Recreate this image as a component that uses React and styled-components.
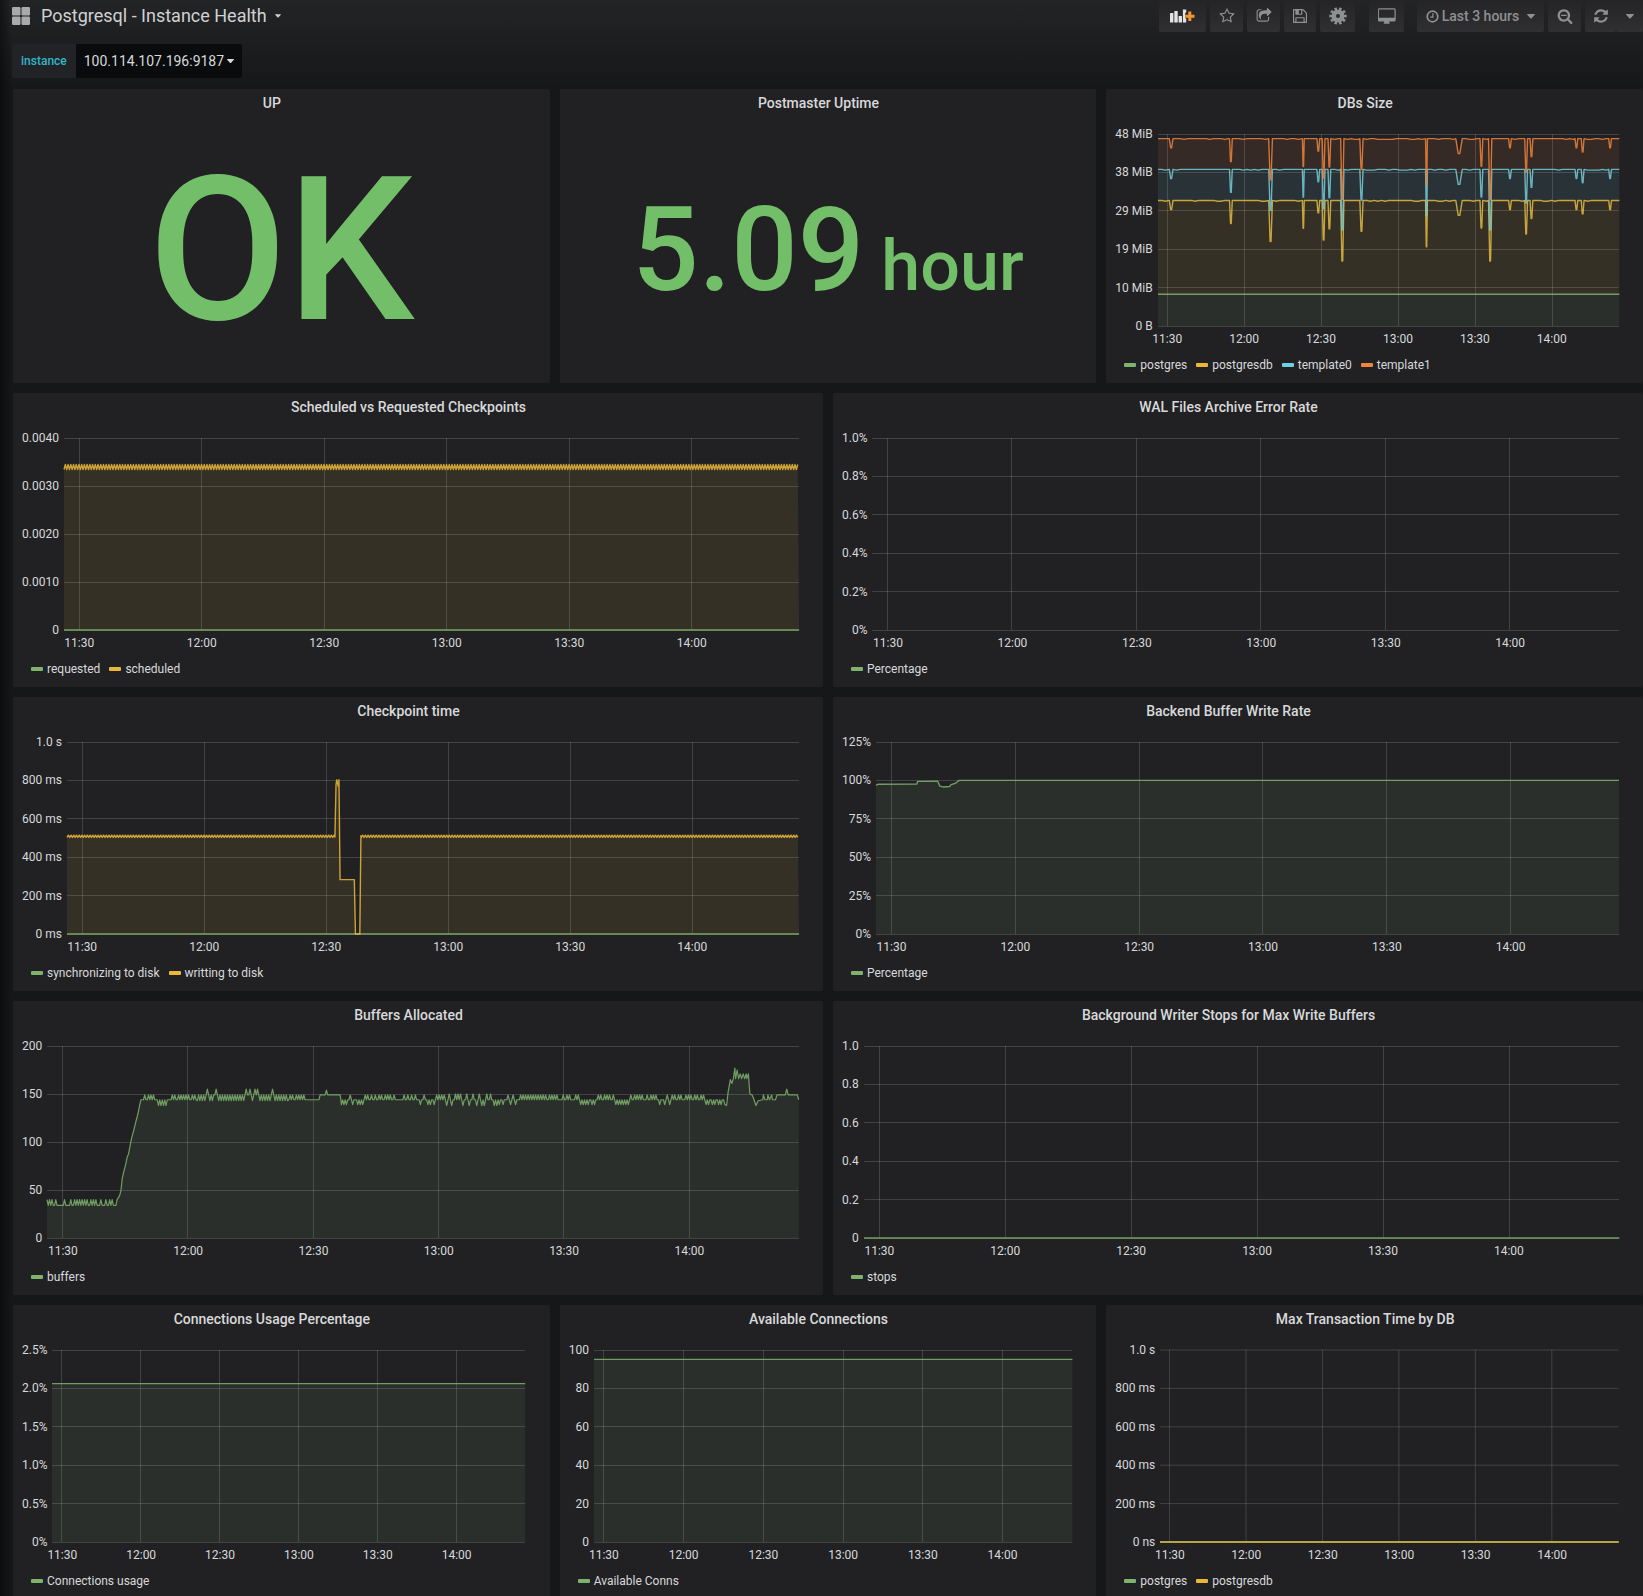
import React from "react";
import styled, { createGlobalStyle } from "styled-components";

const GREEN = "#7eb26d";
const YELLOW = "#eab839";
const BLUE = "#6ed0e0";
const ORANGE = "#ef843c";
const VALUE_GREEN = "#73bf69";

const GlobalStyle = createGlobalStyle`
  *, *::before, *::after { box-sizing: border-box; }
  html { background: #161719; }
  body {
    margin: 0;
    color: #d8d9da;
    font-family: Roboto, "Liberation Sans", sans-serif;
    font-size: 14px;
  }
  button, select { font: inherit; color: inherit; }
`;

/* ---------- page ---------- */

const Page = styled.main`
  height: 100vh;
  overflow-y: auto;
  scrollbar-width: none;
  padding-left: 13px;
  background:
    linear-gradient(90deg, rgba(0, 0, 0, 0.45), transparent 12px),
    linear-gradient(180deg, #222426, #161719 90px);
`;

const Navbar = styled.header`
  display: flex;
  align-items: center;
  justify-content: space-between;
  height: 32px;
  margin-left: -1px;
`;

const TitleButton = styled.button`
  display: flex;
  align-items: center;
  gap: 11px;
  padding: 0;
  border: 0;
  background: none;
  font-size: 18px;
  line-height: 22px;
  color: #d0d1d2;
`;

const TitleText = styled.span`
  margin-right: -3px;
`;

const Actions = styled.div`
  display: flex;
  gap: 4px;
`;

const ActionGroup = styled.div`
  display: flex;
  gap: ${(p) => (p.$joined ? "0" : "4px")};
  margin-right: ${(p) => p.$after || 0}px;
`;

const NavButton = styled.button`
  display: flex;
  align-items: center;
  justify-content: center;
  gap: 3px;
  width: ${(p) => p.$width}px;
  height: 32px;
  padding: 0;
  border: 0;
  border-radius: 2px;
  background: linear-gradient(180deg, #242427, #303033);
  color: #8f9091;
  font-size: 14px;
  font-weight: 500;
`;

const RangeText = styled.span`
  margin-right: 5px;
`;

const Variables = styled.form`
  display: flex;
  padding: 12px 0 11px;
  margin-left: -1px;
`;

const VariableLabel = styled.label`
  padding: 0 9px;
  border-radius: 2px 0 0 2px;
  background: #212327;
  color: #33b5c5;
  font-size: 12px;
  font-weight: 500;
  line-height: 34px;
`;

const SelectBox = styled.div`
  display: grid;
  grid-template-columns: 1fr 15px;
  align-items: center;
  height: 34px;
  background: #0a0b0d;
  border-radius: 0 2px 2px 0;

  svg {
    grid-area: 1 / 2;
    pointer-events: none;
  }
`;

const Select = styled.select`
  grid-area: 1 / 1 / 2 / 3;
  height: 34px;
  width: 166px;
  padding: 0 8px;
  border: 0;
  appearance: none;
  background: transparent;
  font-size: 14px;
`;

const Dashboard = styled.section`
  display: grid;
  grid-template-columns: repeat(6, 1fr);
  gap: 10px;
`;

/* ---------- panels ---------- */

const PanelBox = styled.article`
  grid-column: span ${(p) => p.$span};
  display: flex;
  flex-direction: column;
  min-width: 0;
  min-height: 294px;
  border-radius: 2px;
  background: #212124;
`;

const PanelTitle = styled.h2`
  margin: 0;
  padding-right: 19px;
  font-size: 14px;
  font-weight: 500;
  line-height: 28px;
  text-align: center;
`;

const Stat = styled.div`
  flex: 1;
  display: flex;
  align-items: baseline;
  align-content: center;
  justify-content: center;
  flex-wrap: wrap;
  gap: 0 ${(p) => p.$gap || 0}px;
  color: ${VALUE_GREEN};
  font-size: ${(p) => p.$size}px;
  font-weight: 500;
  line-height: 1;
`;

const Unit = styled.span`
  font-size: 70px;
`;

const ChartGrid = styled.div`
  display: grid;
  grid-template-columns: auto minmax(0, 1fr);
  grid-template-rows: 192px auto;
  column-gap: 5px;
  row-gap: 6px;
  padding: 17px 24px 0 9px;
  font-size: 12px;
  line-height: 14px;
`;

const YAxis = styled.div`
  display: flex;
  flex-direction: column;
  justify-content: space-between;
  margin: -7px 0;
  text-align: right;
  white-space: nowrap;
`;

const XAxis = styled.div`
  grid-column: 2;
  display: grid;
  grid-template-columns: repeat(6, 1fr);
  margin-left: -6.25%;
  margin-right: 6.25%;
  text-align: center;
`;

const Plot = styled.svg`
  display: block;
  width: 100%;
  height: 100%;
  overflow: visible;
`;

const Legend = styled.ul`
  display: flex;
  gap: 9px;
  margin: 0;
  padding: 12px 18px 11px;
  list-style: none;
  font-size: 12px;
  line-height: 14px;
`;

const LegendItem = styled.li`
  display: flex;
  align-items: center;
  gap: 4px;

  &::before {
    content: "";
    width: 12px;
    height: 4px;
    border-radius: 1px;
    background: ${(p) => p.$color};
  }
`;

/* ---------- chart ---------- */

const TIMES = ["11:30", "12:00", "12:30", "13:00", "13:30", "14:00"];
const W = 1000;
const H = 192;

const toPath = (points) =>
  points.map(([x, y]) => `${(x * W).toFixed(2)},${((1 - y) * H).toFixed(2)}`).join(" L");

function Chart({ title, span, labels, series }) {
  return (
    <PanelBox $span={span}>
      <PanelTitle>{title}</PanelTitle>
      <ChartGrid>
        <YAxis>
          {labels.map((l) => (
            <span key={l}>{l}</span>
          ))}
        </YAxis>
        <Plot viewBox={`0 0 ${W} ${H}`} preserveAspectRatio="none" role="img" aria-label={title}>
          <g stroke="#fff" strokeOpacity="0.15" shapeRendering="crispEdges">
            {labels.map((l, i) => {
              const y = (i / (labels.length - 1)) * H;
              return <line key={l} x1="0" x2={W} y1={y} y2={y} vectorEffect="non-scaling-stroke" />;
            })}
            {TIMES.map((t, i) => {
              const x = ((i + 0.5) / 6 - 0.0625) * W;
              return <line key={t} x1={x} x2={x} y1="0" y2={H} vectorEffect="non-scaling-stroke" />;
            })}
          </g>
          {series.map((s) => {
            if (!s.points) return null;
            const floor = s.base ? [...s.base].reverse() : [[1, 0], [0, 0]];
            return (
              <g key={s.name}>
                <path d={`M${toPath(s.points)} L${toPath(floor)}Z`} fill={s.color} fillOpacity="0.1" />
                <path
                  d={`M${toPath(s.points)}`}
                  fill="none"
                  stroke={s.color}
                  strokeOpacity="0.85"
                  strokeWidth={s.stroke || 1.4}
                  strokeLinejoin="round"
                  vectorEffect="non-scaling-stroke"
                />
              </g>
            );
          })}
        </Plot>
        <XAxis>
          {TIMES.map((t) => (
            <span key={t}>{t}</span>
          ))}
        </XAxis>
      </ChartGrid>
      <Legend>
        {series.map((s) => (
          <LegendItem key={s.name} $color={s.color}>
            {s.name}
          </LegendItem>
        ))}
      </Legend>
    </PanelBox>
  );
}

/* ---------- data ---------- */

const random = (seed) => () => {
  seed = (seed * 16807) % 2147483647;
  return seed / 2147483647;
};

const flat = (y) => [[0, y], [1, y]];

const zigzag = (from, to, y, amp, step = 1 / 540) => {
  const out = [];
  for (let x = from, i = 0; x <= to; x += step, i++) out.push([x, y + (i % 2 ? amp : -amp)]);
  return out;
};

/* dips shared by every database series: time, half width, depth */
const DIPS = [
  [0.0285, 0.004, 0.048], [0.158, 0.003, 0.12], [0.244, 0.004, 0.214],
  [0.315, 0.002, 0.145], [0.3475, 0.003, 0.065], [0.359, 0.003, 0.206],
  [0.3715, 0.003, 0.148], [0.3995, 0.0035, 0.316], [0.441, 0.0035, 0.161],
  [0.582, 0.002, 0.241], [0.6525, 0.007, 0.078], [0.701, 0.003, 0.144],
  [0.72, 0.0035, 0.316], [0.763, 0.003, 0.048], [0.798, 0.003, 0.175],
  [0.8095, 0.003, 0.094], [0.907, 0.003, 0.048], [0.9205, 0.003, 0.07],
  [0.98, 0.003, 0.048],
];

const withDips = (level, seed) => {
  const rnd = random(seed);
  const out = [[0, level]];
  let x = 0;
  DIPS.forEach(([at, half, depth]) => {
    for (x += 0.008; x < at - half - 0.002; x += 0.008) {
      out.push([x, level - (rnd() > 0.7 ? 0.004 : 0)]);
    }
    out.push([at - half, level], [at - half * 0.25, level - depth], [at + half * 0.25, level - depth], [at + half, level]);
    x = at + half;
  });
  out.push([1, level]);
  return out;
};

const template1 = withDips(0.976, 11);
const template0 = withDips(0.816, 29);
const postgresdb = withDips(0.654, 53);
const postgres = flat(0.165);

const writing = [
  ...zigzag(0, 0.365, 0.509, 0.006),
  [0.366, 0.505], [0.3675, 0.78], [0.3685, 0.803], [0.3705, 0.77], [0.3715, 0.803],
  [0.373, 0.283], [0.3925, 0.283], [0.394, 0], [0.4, 0], [0.4015, 0.512],
  ...zigzag(0.402, 1, 0.509, 0.006),
];

const backend = [
  [0, 0.774], [0.003, 0.78], [0.055, 0.781], [0.056, 0.795], [0.083, 0.796], [0.086, 0.77],
  [0.09, 0.766], [0.099, 0.768], [0.101, 0.778], [0.107, 0.785], [0.112, 0.8], [1, 0.8],
];

/* up to a time: resting level, chance of a spike, its size, chance of the opposite spike */
const BUFFER_STAGES = [
  [0.094, 34, 0.5, 6, 0], [0.148, 144, 0.7, 5, 0], [0.16, 144, 0.7, -6, 0], [0.2, 144, 0.7, 5, 0],
  [0.32, 149, 0.65, -6, 0.25], [0.347, 144, 0.6, 5, 0], [0.363, 144, 0.05, 5, 0], [0.391, 149, 0.03, 5, 0],
  [0.42, 144, 0.7, -5, 0.05], [0.488, 144, 0.6, 5, 0], [0.515, 144, 0.6, -5, 0.1], [0.53, 144, 0.6, 5, 0],
  [0.6, 144, 0.5, -6, 0.3], [0.632, 144, 0.5, -5, 0.2], [0.71, 144, 0.65, 5, 0], [0.732, 144, 0.6, -5, 0],
  [0.755, 144, 0.6, 5, 0], [0.775, 144, 0.9, -5, 0], [0.81, 144, 0.6, 5, 0], [0.83, 144, 0.5, -5, 0.2],
  [0.875, 144, 0.65, 5, 0], [0.903, 144, 0.6, -5, 0.1],
];

const buffers = (() => {
  const rnd = random(77);
  const out = [];
  let spiked = false;
  for (let x = 0; x < 0.903; x += 1 / 600) {
    if (x > 0.094 && x < 0.126) {
      const t = (x - 0.094) / 0.032;
      out.push([x, (40 + 105 * (t < 0.15 ? t * 0.5 : t) + rnd() * 3) / 200]);
      continue;
    }
    const [, level, chance, size, opposite] = BUFFER_STAGES.find((s) => x <= s[0]);
    const r = rnd();
    let y = level;
    if (!spiked && r < chance) y += size;
    else if (!spiked && r > 1 - opposite) y -= size;
    spiked = y !== level;
    out.push([x, y / 200]);
  }
  [
    [0.904, 138], [0.906, 152], [0.909, 165], [0.911, 161], [0.913, 166], [0.915, 177],
    [0.916, 166], [0.918, 175], [0.92, 166], [0.922, 171], [0.924, 166], [0.926, 171],
    [0.928, 166], [0.93, 171], [0.931, 166], [0.933, 171], [0.935, 150], [0.938, 149],
    [0.941, 143], [0.943, 138], [0.946, 143], [0.952, 144], [0.953, 149], [0.955, 144],
    [0.958, 144], [0.959, 149], [0.961, 144], [0.964, 149], [0.965, 144], [0.969, 144],
    [0.971, 149], [0.982, 149], [0.984, 155], [0.986, 149], [0.998, 149], [1, 144],
  ].forEach(([x, y]) => out.push([x, y / 200]));
  return out;
})();

const MS_LABELS = ["1.0 s", "800 ms", "600 ms", "400 ms", "200 ms"];

const CHARTS = [
  {
    title: "DBs Size",
    span: 2,
    labels: ["48 MiB", "38 MiB", "29 MiB", "19 MiB", "10 MiB", "0 B"],
    series: [
      { name: "postgres", color: GREEN, points: postgres },
      { name: "postgresdb", color: YELLOW, points: postgresdb, base: postgres },
      { name: "template0", color: BLUE, points: template0, base: postgresdb },
      { name: "template1", color: ORANGE, points: template1, base: template0 },
    ],
  },
  {
    title: "Scheduled vs Requested Checkpoints",
    span: 3,
    labels: ["0.0040", "0.0030", "0.0020", "0.0010", "0"],
    series: [
      { name: "requested", color: GREEN, points: flat(0) },
      { name: "scheduled", color: YELLOW, points: zigzag(0, 1, 0.849, 0.013) },
    ],
  },
  {
    title: "WAL Files Archive Error Rate",
    span: 3,
    labels: ["1.0%", "0.8%", "0.6%", "0.4%", "0.2%", "0%"],
    series: [{ name: "Percentage", color: GREEN }],
  },
  {
    title: "Checkpoint time",
    span: 3,
    labels: [...MS_LABELS, "0 ms"],
    series: [
      { name: "synchronizing to disk", color: GREEN, points: flat(0) },
      { name: "writting to disk", color: YELLOW, points: writing },
    ],
  },
  {
    title: "Backend Buffer Write Rate",
    span: 3,
    labels: ["125%", "100%", "75%", "50%", "25%", "0%"],
    series: [{ name: "Percentage", color: GREEN, points: backend }],
  },
  {
    title: "Buffers Allocated",
    span: 3,
    labels: ["200", "150", "100", "50", "0"],
    series: [{ name: "buffers", color: GREEN, points: buffers, stroke: 1.2 }],
  },
  {
    title: "Background Writer Stops for Max Write Buffers",
    span: 3,
    labels: ["1.0", "0.8", "0.6", "0.4", "0.2", "0"],
    series: [{ name: "stops", color: GREEN, points: flat(0) }],
  },
  {
    title: "Connections Usage Percentage",
    span: 2,
    labels: ["2.5%", "2.0%", "1.5%", "1.0%", "0.5%", "0%"],
    series: [{ name: "Connections usage", color: GREEN, points: flat(0.825) }],
  },
  {
    title: "Available Connections",
    span: 2,
    labels: ["100", "80", "60", "40", "20", "0"],
    series: [{ name: "Available Conns", color: GREEN, points: flat(0.951) }],
  },
  {
    title: "Max Transaction Time by DB",
    span: 2,
    labels: [...MS_LABELS, "0 ns"],
    series: [
      { name: "postgres", color: GREEN, points: flat(0) },
      { name: "postgresdb", color: YELLOW, points: flat(0) },
    ],
  },
];

/* ---------- icons ---------- */

const Glyph = ({ size = 16, box = "0 0 1792 1792", d }) => (
  <svg width={size} height={size} viewBox={box} fill="currentColor" aria-hidden="true">
    <path d={d} />
  </svg>
);

const STAR =
  "M1201 1004l306-297-422-62-189-382-189 382-422 62 306 297-73 421 378-199 377 199zm527-357q0 22-26 48l-363 354 86 500q1 7 1 20 0 50-41 50-19 0-40-12l-449-236-449 236q-22 12-40 12-21 0-31.5-14.5t-10.5-35.5q0-6 2-20l86-500-364-354q-25-27-25-48 0-37 56-46l502-73 225-455q19-41 49-41t49 41l225 455 502 73q56 9 56 46z";
const SHARE =
  "M1472 989v259q0 119-84.5 203.5t-203.5 84.5h-832q-119 0-203.5-84.5t-84.5-203.5v-832q0-119 84.5-203.5t203.5-84.5h255q13 0 22.5 9.5t9.5 22.5q0 27-26 32-77 26-133 60-10 4-16 4h-112q-66 0-113 47t-47 113v832q0 66 47 113t113 47h832q66 0 113-47t47-113v-214q0-19 18-29 28-13 54-37 16-16 35-8 21 9 21 29zm237-496l-384 384q-18 19-45 19-12 0-25-5-39-17-39-59v-192h-160q-323 0-438 131-119 137-74 473 3 23-20 34-8 2-12 2-16 0-26-13-10-14-21-31t-39.5-68.5-49.5-99.5-38.5-114-17.5-122q0-49 3.5-91t14-90 28-88 47-81.5 68.5-74 94.5-61.5 124.5-48.5 159.5-30.5 196.5-11h160v-192q0-42 39-59 13-5 25-5 26 0 45 19l384 384q19 19 19 45t-19 45z";
const SAVE =
  "M384 1536h768v-384h-768v384zm896 0h128v-896q0-14-10-38.5t-20-34.5l-281-281q-10-10-34-20t-39-10v416q0 40-28 68t-68 28h-576q-40 0-68-28t-28-68v-416h-128v1280h128v-416q0-40 28-68t68-28h832q40 0 68 28t28 68v416zm-384-928v-320q0-13-9.5-22.5t-22.5-9.5h-192q-13 0-22.5 9.5t-9.5 22.5v320q0 13 9.5 22.5t22.5 9.5h192q13 0 22.5-9.5t9.5-22.5zm640 32v928q0 40-28 68t-68 28h-1344q-40 0-68-28t-28-68v-1344q0-40 28-68t68-28h928q40 0 88 20t76 48l280 280q28 28 48 76t20 88z";
const DESKTOP =
  "M1728 992v-832q0-13-9.5-22.5t-22.5-9.5h-1600q-13 0-22.5 9.5t-9.5 22.5v832q0 13 9.5 22.5t22.5 9.5h1600q13 0 22.5-9.5t9.5-22.5zm128-832v1088q0 66-47 113t-113 47h-544q0 37 16 77.5t32 71 16 43.5q0 26-19 45t-45 19h-512q-26 0-45-19t-19-45q0-14 16-44t32-70 16-78h-544q-66 0-113-47t-47-113v-1088q0-66 47-113t113-47h1600q66 0 113 47t47 113z";
const ZOOM_OUT =
  "M1088 800v64q0 13-9.5 22.5t-22.5 9.5h-576q-13 0-22.5-9.5t-9.5-22.5v-64q0-13 9.5-22.5t22.5-9.5h576q13 0 22.5 9.5t9.5 22.5zm128 32q0-185-131.5-316.5t-316.5-131.5-316.5 131.5-131.5 316.5 131.5 316.5 316.5 131.5 316.5-131.5 131.5-316.5zm512 832q0 53-37.5 90.5t-90.5 37.5q-54 0-90-38l-343-342q-179 124-399 124-143 0-273.5-55.5t-225-150-150-225-55.5-273.5 55.5-273.5 150-225 225-150 273.5-55.5 273.5 55.5 225 150 150 225 55.5 273.5q0 220-124 399l343 343q37 37 37 90z";
const REFRESH =
  "M1639 1056q0 5-1 7-64 268-268 434.5t-478 166.5q-146 0-282.5-55t-243.5-157l-129 129q-19 19-45 19t-45-19-19-45v-448q0-26 19-45t45-19h448q26 0 45 19t19 45-19 45l-137 137q71 66 161 102t187 36q134 0 250-65t186-179q11-17 53-117 8-23 30-23h192q13 0 22.5 9.5t9.5 22.5zm25-800v448q0 26-19 45t-45 19h-448q-26 0-45-19t-19-45 19-45l138-138q-148-137-349-137-134 0-250 65t-186 179q-11 17-53 117-8 23-30 23h-199q-13 0-22.5-9.5t-9.5-22.5v-7q65-268 270-434.5t480-166.5q146 0 284 55.5t245 156.5l130-129q19-19 45-19t45 19 19 45z";

const Caret = ({ width = 8 }) => (
  <svg width={width} height={width / 2 + 1} viewBox="0 0 8 5" fill="currentColor" aria-hidden="true">
    <path d="M.4 0h7.2q.6.3.2.8L4.4 4.6q-.4.3-.8 0L.2.8Q-.2.3.4 0z" />
  </svg>
);

const DashboardIcon = () => (
  <svg width="18" height="18" viewBox="0 0 18 18" fill="#a9aaab" aria-hidden="true">
    <rect width="8.5" height="8.5" rx="1.2" />
    <rect x="9.5" width="8.5" height="8.5" rx="1.2" />
    <rect y="9.5" width="8.5" height="8.5" rx="1.2" />
    <rect x="9.5" y="9.5" width="8.5" height="8.5" rx="1.2" />
  </svg>
);

const AddPanelIcon = () => (
  <svg width="25" height="14" viewBox="0 0 25 14" aria-hidden="true">
    <g fill="#e3e3e3">
      <rect y="4" width="3.4" height="9.5" rx=".5" />
      <rect x="4.3" y="2" width="3.4" height="11.5" rx=".5" />
      <rect x="8.6" y="7" width="3.4" height="6.5" rx=".5" />
      <path d="M12.9.5h3.3v3.2h-1v5.600h1v4.200h-3.300z" />
    </g>
    <path d="M18.300 2.500h3v3.200h3.200v3h-3.200v3.300h-3V8.700h-3.100v-3h3.100z" fill="#f2982d" />
  </svg>
);

const GearIcon = () => (
  <svg width="18" height="18" viewBox="0 0 18 18" fill="none" stroke="currentColor" aria-hidden="true">
    <circle cx="9" cy="9" r="4.300" strokeWidth="4.600" />
    <circle cx="9" cy="9" r="7.300" strokeWidth="2.800" pathLength="40" strokeDasharray="2.200 1.800" strokeDashoffset="1.100" />
  </svg>
);

const ClockIcon = () => (
  <svg width="13" height="13" viewBox="0 0 13 13" fill="none" stroke="currentColor" aria-hidden="true">
    <circle cx="6.500" cy="6.500" r="5.300" strokeWidth="1.700" />
    <path d="M6.900 3.200v3.900H4.200" strokeWidth="1.200" />
  </svg>
);

/* ---------- app ---------- */

export default function App() {
  return (
    <>
      <GlobalStyle />
      <Page>
        <Navbar>
          <TitleButton type="button">
            <DashboardIcon />
            <TitleText>Postgresql - Instance Health</TitleText>
            <Caret width={6} />
          </TitleButton>
          <Actions>
            <ActionGroup $after={10}>
              <NavButton type="button" $width={47} aria-label="Add panel"><AddPanelIcon /></NavButton>
              <NavButton type="button" $width={33} aria-label="Mark as favorite"><Glyph d={STAR} /></NavButton>
              <NavButton type="button" $width={33} aria-label="Share dashboard"><Glyph d={SHARE} /></NavButton>
              <NavButton type="button" $width={32} aria-label="Save dashboard"><Glyph size={14} box="0 128 1536 1536" d={SAVE} /></NavButton>
              <NavButton type="button" $width={35} aria-label="Settings"><GearIcon /></NavButton>
            </ActionGroup>
            <ActionGroup $after={9}>
              <NavButton type="button" $width={35} aria-label="Cycle view mode"><Glyph size={18} box="-32 -64 1920 1792" d={DESKTOP} /></NavButton>
            </ActionGroup>
            <NavButton type="button" $width={127}>
              <ClockIcon />
              <RangeText>Last 3 hours</RangeText>
              <Caret />
            </NavButton>
            <NavButton type="button" $width={33} aria-label="Zoom out"><Glyph d={ZOOM_OUT} /></NavButton>
            <ActionGroup $joined>
              <NavButton type="button" $width={31} aria-label="Refresh"><Glyph d={REFRESH} /></NavButton>
              <NavButton type="button" $width={27} aria-label="Refresh interval"><Caret /></NavButton>
            </ActionGroup>
          </Actions>
        </Navbar>

        <Variables>
          <VariableLabel htmlFor="instance">instance</VariableLabel>
          <SelectBox>
            <Select id="instance" defaultValue="100.114.107.196:9187">
              <option>100.114.107.196:9187</option>
            </Select>
            <Caret width={7} />
          </SelectBox>
        </Variables>

        <Dashboard>
          <PanelBox $span={2}>
            <PanelTitle>UP</PanelTitle>
            <Stat $size={201}>OK</Stat>
          </PanelBox>
          <PanelBox $span={2}>
            <PanelTitle>Postmaster Uptime</PanelTitle>
            <Stat $size={117} $gap={17}>
              <span>5.09</span>
              <Unit>hour</Unit>
            </Stat>
          </PanelBox>
          {CHARTS.map((c) => (
            <Chart key={c.title} {...c} />
          ))}
        </Dashboard>
      </Page>
    </>
  );
}
